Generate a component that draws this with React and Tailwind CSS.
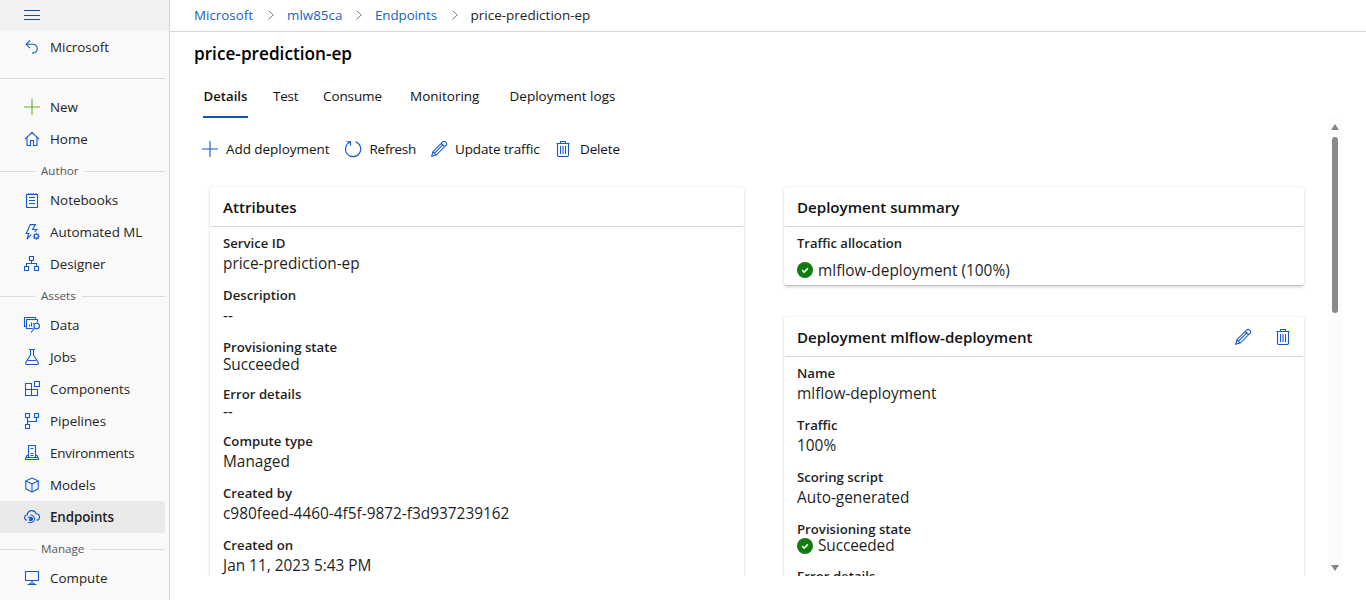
const paths = {
  menu: <path d="M0 2.500h16M0 7.500h16M0 11.500h16" stroke="#0f4f9e" strokeWidth="1.100" />,
  back: <path d="M6 1.5 2.2 5.3 6 9.1M2.2 5.3h6.6a4.4 4.4 0 0 1 4.5 4.5 4.4 4.4 0 0 1-4.500 4.300H8" />,
  plus: <path d="M8 0v16M0 8h16" />,
  home: <path d="M1.2 8 8 1.400 14.800 8M3 6.600v7.900h3.500v-5h3v5H13V6.600" />,
  notebook: <path d="M2.500 2.500h11v13h-11zM4.500 1v1.500M7 1v1.500M9.500 1v1.500M12 1v1.500M5 5.500h6M5 8.500h6M5 11.500h6" />,
  automl: (
    <>
      <path d="M7.300 10.500 3 15.200 4.800 9.500H2.300L6.300.6h5.200L8.600 5.500h4.200L10.600 8" />
      <circle cx="12.300" cy="12.300" r="2" />
      <path d="M12.300 8.800v1.500M12.300 14.300v1.500M8.800 12.300h1.500M14.300 12.300h1.500M9.800 9.800l1.100 1.100M13.700 13.700l1.100 1.100M9.800 14.800l1.100-1.100M13.700 10.900l1.100-1.100" />
    </>
  ),
  designer: <path d="M5.500.5h4v4h-4zM.500 10.500h4v4h-4zM10.500 10.500h4v4h-4zM7.500 4.500v3M2.500 10.500v-3h10v3" />,
  data: (
    <>
      <path d="M2.500 9.500H.500v-9h11v2M9 11.500H2.500v-9h11v3M5.500 9.500v-2M7.500 9.500v-4M9.500 7v-1" />
      <circle cx="12.700" cy="9" r="2.700" />
      <path d="M10.800 11 7 15.500" />
    </>
  ),
  jobs: <path d="M5 .500h6M6.500.500v5.500L1.800 13.500a1.300 1.300 0 0 0 1.100 2h10.200a1.300 1.300 0 0 0 1.100-2L9.500 6V.500M4 11.500h8" />,
  components: <path d="M1.500 2.500h6v12h-6zM1.500 8.500h12v6h-12zM10.500.500h5v5h-5z" />,
  pipelines: <path d="M1.500.500h4v4h-4zM10.500.500h4v4h-4zM1.500 11.500h4v4h-4zM3.500 4.500v7M3.500 8.500h9v-4" />,
  environments: <path d="M4.500 12.500V.500h7v12M6.500 3.500h3M6.500 8.500h3M6.500 10.500h3M4.500 10.500H3l-1.500 3v1h13v-1l-1.500-3h-1.500M2 12.500h12" />,
  models: <path d="m8 1 6.200 2.800v8L8 15l-6.200-3.200v-8zM1.800 3.900 8 7l6.200-3.100M8 7v8" />,
  endpoints: (
    <>
      <path d="M3 11.300C1.300 11 .6 9.800.6 8.400c0-1.400 1-2.600 2.600-2.700C3.600 3.200 5.400 1.600 7.800 1.600c2.200 0 3.700 1.200 4.300 3.100 2 .1 3.400 1.600 3.400 3.400 0 1.800-1.300 3.200-3.200 3.200" />
      <path d="M3.600 8.300h3.200a1.600 1.600 0 1 1 0 3.200H5M4.200 13.500h2.900a3.700 3.700 0 1 0-.7-7.400" />
      <circle cx="7" cy="9.900" r="1.300" fill="currentColor" />
    </>
  ),
  compute: <path d="M1.500 1.500h13v9h-13zM8 10.500v2.500M3.500 14.500h9M5.500 14.500c0-1 1-1.500 2.500-1.500s2.500.500 2.500 1.500" />,
  refresh: <path d="M5.200 1A7.600 7.600 0 1 0 10.500.8M1.500.700h4v4" />,
  pencil: <path d="m.700 15.300 1.200-4.600L11.800.9a1.700 1.700 0 0 1 2.500 0l.8.8a1.700 1.700 0 0 1 0 2.500L5.200 14.100zM10.300 2.400l3.300 3.300M1.900 10.700l3.300 3.400M11.700 3.900l-8 8" />,
  trash: <path d="M1.500 2.500h13M5.500 2.500v-2h5v2M2.500 2.500v11.500a1.500 1.500 0 0 0 1.500 1.500h8a1.500 1.500 0 0 0 1.500-1.500V2.500M5.500 5v8M8 5v8M10.500 5v8" />,
};

function Icon({ name, className = "text-[#1459cf]" }) {
  return (
    <svg viewBox="0 0 16 16" fill="none" stroke="currentColor" strokeWidth="1.1" className={`size-4 shrink-0 overflow-visible ${className}`}>
      {paths[name]}
    </svg>
  );
}

function NavItem({ icon, label, active, iconClass, labelClass = "" }) {
  return (
    <a
      className={`flex h-8 w-[165px] items-center gap-[10px] pl-6 text-[13.4px] ${
        active ? "rounded-r-[3px] bg-[#e9e9e9] font-semibold tracking-[-0.1px]" : ""
      }`}
    >
      <Icon name={icon} className={iconClass} />
      <span className={labelClass}>{label}</span>
    </a>
  );
}

function NavSection({ label }) {
  return (
    <div className="flex h-[29px] w-[165px] items-center pt-[3px] text-[11.65px] text-[#555]">
      <span className="h-px w-[35px] bg-[#dcdcdc]" />
      <span className="px-[6px]">{label}</span>
      <span className="h-px flex-1 bg-[#dcdcdc]" />
    </div>
  );
}

function Sidebar() {
  return (
    <nav className="h-full w-[170px] shrink-0 overflow-hidden border-r border-[#d4d4d4] bg-[#f9f9f9] text-[#242424]">
      <div className="flex h-[31px] items-center bg-[#f2f2f2] pl-6">
        <Icon name="menu" />
      </div>
      <NavItem icon="back" label="Microsoft" />
      <div className="mt-[15px] mb-3 h-px w-[165px] bg-[#dadada]" />
      <NavItem icon="plus" label="New" iconClass="text-[#6bb12d]" />
      <NavItem icon="home" label="Home" />
      <NavSection label="Author" />
      <NavItem icon="notebook" label="Notebooks" />
      <NavItem icon="automl" label="Automated ML" />
      <NavItem icon="designer" label="Designer" />
      <NavSection label="Assets" />
      <NavItem icon="data" label="Data" />
      <NavItem icon="jobs" label="Jobs" />
      <NavItem icon="components" label="Components" />
      <NavItem icon="pipelines" label="Pipelines" />
      <NavItem icon="environments" label="Environments" labelClass="tracking-[-0.2px]" />
      <NavItem icon="models" label="Models" />
      <NavItem icon="endpoints" label="Endpoints" active />
      <NavSection label="Manage" />
      <NavItem icon="compute" label="Compute" />
    </nav>
  );
}

function Crumb({ children, className }) {
  return (
    <span className={`flex items-center justify-between pr-[13px] ${className}`}>
      <span className="text-[#1b5fc4]">{children}</span>
      <svg viewBox="0 0 6 10" className="h-[10px] w-[6px]" fill="none" stroke="#767676">
        <path d="m.7.500 4.500 4.500-4.500 4.500" />
      </svg>
    </span>
  );
}

function Check() {
  return (
    <svg viewBox="0 0 16 16" className="mr-[5px] size-4 shrink-0">
      <circle cx="8" cy="8" r="8" fill="#107c10" />
      <path d="m5.200 8.200 2 1.900 3.700-3.700" fill="none" stroke="#fff" strokeWidth="1.600" />
    </svg>
  );
}

function Card({ title, actions, className = "", children }) {
  return (
    <section className={`rounded-[2px] bg-white shadow-[0_1.6px_3.6px_rgba(0,0,0,0.16),0_0.3px_0.9px_rgba(0,0,0,0.14)] ${className}`}>
      <header className="mx-px flex h-10 items-center justify-between border-b border-[#d6d6d6] pr-3 pl-3">
        <h2 className="pt-[2px] text-[15.1px] font-semibold text-[#111]">{title}</h2>
        {actions}
      </header>
      <div className="px-[13px] pt-[6px]">{children}</div>
    </section>
  );
}

function Field({ label, value, tight, ok }) {
  return (
    <div className={tight ? "h-[47px]" : "h-[52px]"}>
      <div className="text-[13.2px] leading-5 font-semibold">{label}</div>
      {value && (
        <div
          className={`flex items-center text-[15.4px] ${tight ? "tracking-[-0.1px]" : ""} ${
            ok ? "h-[14px] leading-[14px]" : tight ? "leading-[15px]" : "leading-[21px]"
          }`}
        >
          {ok && <Check />}
          <span>{value}</span>
        </div>
      )}
    </div>
  );
}

export default function App() {
  return (
    <div className="flex h-[600px] w-[1366px] overflow-hidden bg-white font-['Open_Sans',sans-serif] text-[#1f1f1f]">
      <Sidebar />
      <main className="flex min-w-0 flex-1 flex-col">
        <div className="flex h-8 shrink-0 items-center border-b border-[#d6d6d6] pl-6 text-[13.4px]">
          <Crumb className="w-[93px]">Microsoft</Crumb>
          <Crumb className="w-[88px]">mlw85ca</Crumb>
          <Crumb className="w-[95.500px] tracking-[-0.1px]">Endpoints</Crumb>
          <span className="text-[13.500px]">price-prediction-ep</span>
        </div>
        <h1 className="h-[44px] pl-6 text-[17.2px] leading-[44px] font-semibold text-black">price-prediction-ep</h1>
        <div className="flex h-[42px] pl-[33px] text-[13.500px] leading-[41px] text-[#111]">
          <span className="mr-[25px] w-[45px] border-b-2 border-[#1058b8] text-center text-[13.200px] font-semibold">Details</span>
          <span className="w-[50px] tracking-[-0.2px]">Test</span>
          <span className="w-[87px] tracking-[-0.1px]">Consume</span>
          <span className="w-[99.500px]">Monitoring</span>
          <span>Deployment logs</span>
        </div>
        <div className="flex h-[458px] pl-8">
          <div className="flex h-full w-[1126px] flex-col overflow-hidden">
            <div className="flex h-[62px] shrink-0 items-center text-[13.500px] text-[#111]">
              <span className="flex w-[143px] items-center gap-2 tracking-[-0.05px]"><Icon name="plus" />Add deployment</span>
              <span className="flex w-[86px] items-center gap-[8.500px] tracking-[-0.250px]"><Icon name="refresh" />Refresh</span>
              <span className="flex w-[124px] items-center gap-2 tracking-[-0.150px]"><Icon name="pencil" />Update traffic</span>
              <span className="flex items-center gap-[9px] tracking-[-0.150px]"><Icon name="trash" />Delete</span>
            </div>
            <div className="flex pt-[7px] pl-2">
              <Card title="Attributes" className="h-[480px] w-[534px]">
                <Field label="Service ID" value="price-prediction-ep" />
                <Field label="Description" value="--" />
                <Field label="Provisioning state" value="Succeeded" tight />
                <Field label="Error details" value="--" tight />
                <Field label="Compute type" value="Managed" />
                <Field label="Created by" value="c980feed-4460-4f5f-9872-f3d937239162" />
                <Field label="Created on" value="Jan 11, 2023 5:43 PM" />
              </Card>
              <div className="ml-10 flex w-[520px] flex-col gap-8">
                <Card title="Deployment summary" className="h-[98px]">
                  <div className="text-[13px] leading-5 font-semibold">Traffic allocation</div>
                  <div className="flex h-[34px] items-center text-[15.4px] leading-[22px]">
                    <Check />
                    <span className="pt-px">mlflow-deployment (100%)</span>
                  </div>
                </Card>
                <Card
                  title="Deployment mlflow-deployment"
                  className="h-[400px]"
                  actions={
                    <span className="flex gap-6">
                      <Icon name="pencil" />
                      <Icon name="trash" />
                    </span>
                  }
                >
                  <Field label="Name" value="mlflow-deployment" />
                  <Field label="Traffic" value="100%" />
                  <Field label="Scoring script" value="Auto-generated" />
                  <Field label="Provisioning state" value="Succeeded" tight ok />
                  <Field label="Error details" tight />
                </Card>
              </div>
            </div>
          </div>
          <div className="flex w-[14px] flex-col items-center bg-[#fcfcfc] pt-[6px] pb-[5px]">
            <svg viewBox="0 0 8 6" className="h-[6px] w-2" fill="#858585"><path d="M4 0 8 6H0z" /></svg>
            <div className="mt-[7px] h-[176px] w-[6px] rounded-full bg-[#8a8a8a]" />
            <svg viewBox="0 0 8 6" className="mt-auto h-[6px] w-2" fill="#858585"><path d="M0 0h8L4 6z" /></svg>
          </div>
        </div>
      </main>
    </div>
  );
}
